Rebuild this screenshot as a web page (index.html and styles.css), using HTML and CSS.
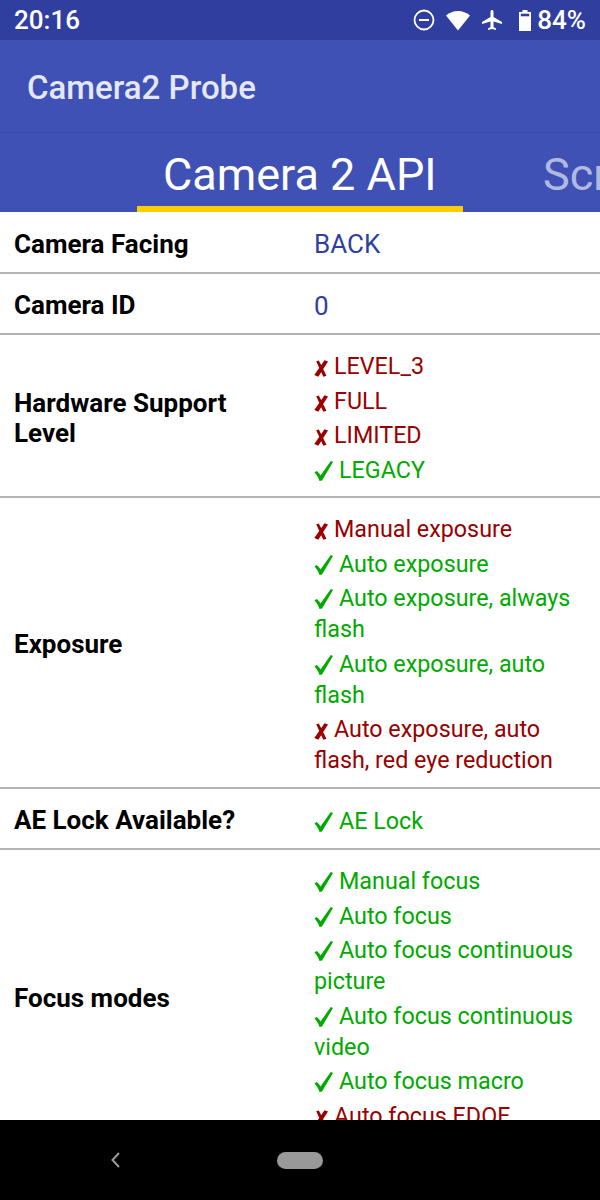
FILE: index.html
```html
<!DOCTYPE html>
<html lang="en">
<head>
  <meta charset="UTF-8">
  <meta name="viewport" content="width=device-width, initial-scale=1.0">
  <title>Camera2 Probe</title>
  <link rel="stylesheet" href="styles.css">
</head>
<body>
  <svg class="defs" width="0" height="0">
    <symbol id="cross" viewBox="0 0 14 17"><path d="M10.500 0.300L14 1.500 4.300 16.700 0.300 15z M2.200 1.200L4.800 0.500 12.500 15.800 9.300 16.700z"/></symbol>
    <symbol id="check" viewBox="0 0 19 20"><path d="M16.800 0L19 1 8 19.500 5.500 20C4.500 16.500 2.500 13.500 0.500 11.500L2.500 10C4 11 5.500 12.500 6.500 14.500z"/></symbol>
  </svg>
  <div class="phone">
    <div class="status-bar">
      <span class="clock">20:16</span>
      <div class="status-icons">
        <svg class="icon" width="24" height="24" viewBox="0 0 24 24"><circle cx="12" cy="12" r="9.500" fill="none" stroke="#fff" stroke-width="1.800"/><rect x="7" y="11" width="10" height="2" fill="#fff"/></svg>
        <svg class="icon" width="26" height="24" viewBox="0 0 26 24"><path d="M1 7.500C4.500 4.600 8.600 3 13 3s8.500 1.600 12 4.500L13 22.500z" fill="#fff"/></svg>
        <svg class="icon" width="24" height="24" viewBox="0 0 24 24"><path d="M22 16v-2l-8.500-5V3.500C13.500 2.700 12.800 2 12 2s-1.500.7-1.500 1.500V9L2 14v2l8.500-2.500V19L8 20.500V22l4-1 4 1v-1.500L13.500 19v-5.500z" fill="#fff"/></svg>
        <svg class="icon battery-icon" width="14" height="24" viewBox="0 0 14 24"><path d="M4.500 2h5v2H13v19H1V4h3.500z" fill="#fff"/><rect x="2.800" y="5.700" width="8.400" height="2.600" fill="#303f9f"/></svg>
        <span class="battery">84%</span>
      </div>
    </div>

    <header class="toolbar">
      <span class="app-title">Camera2 Probe</span>
    </header>

    <nav class="tabs">
      <div class="tab active">Camera 2 API</div>
      <div class="tab">Screen</div>
    </nav>

    <main class="content">
      <div class="row">
        <div class="label">Camera Facing</div>
        <div class="value plain">BACK</div>
      </div>
      <div class="row">
        <div class="label">Camera ID</div>
        <div class="value plain">0</div>
      </div>
      <div class="row">
        <div class="label">Hardware Support Level</div>
        <div class="value">
          <p class="no"><svg class="mark"><use href="#cross"/></svg>LEVEL_3</p>
          <p class="no"><svg class="mark"><use href="#cross"/></svg>FULL</p>
          <p class="no"><svg class="mark"><use href="#cross"/></svg>LIMITED</p>
          <p class="yes"><svg class="mark"><use href="#check"/></svg>LEGACY</p>
        </div>
      </div>
      <div class="row">
        <div class="label">Exposure</div>
        <div class="value">
          <p class="no"><svg class="mark"><use href="#cross"/></svg>Manual exposure</p>
          <p class="yes"><svg class="mark"><use href="#check"/></svg>Auto exposure</p>
          <p class="yes"><svg class="mark"><use href="#check"/></svg>Auto exposure, always flash</p>
          <p class="yes"><svg class="mark"><use href="#check"/></svg>Auto exposure, auto flash</p>
          <p class="no"><svg class="mark"><use href="#cross"/></svg>Auto exposure, auto flash, red eye reduction</p>
        </div>
      </div>
      <div class="row">
        <div class="label">AE Lock Available?</div>
        <div class="value">
          <p class="yes"><svg class="mark"><use href="#check"/></svg>AE Lock</p>
        </div>
      </div>
      <div class="row">
        <div class="label">Focus modes</div>
        <div class="value">
          <p class="yes"><svg class="mark"><use href="#check"/></svg>Manual focus</p>
          <p class="yes"><svg class="mark"><use href="#check"/></svg>Auto focus</p>
          <p class="yes"><svg class="mark"><use href="#check"/></svg>Auto focus continuous picture</p>
          <p class="yes"><svg class="mark"><use href="#check"/></svg>Auto focus continuous video</p>
          <p class="yes"><svg class="mark"><use href="#check"/></svg>Auto focus macro</p>
          <p class="no"><svg class="mark"><use href="#cross"/></svg>Auto focus EDOF</p>
        </div>
      </div>
    </main>

    <div class="nav-bar">
      <svg class="back" width="14" height="20" viewBox="0 0 14 20"><path d="M11 3L4.500 10 11 17" fill="none" stroke="#999" stroke-width="2"/></svg>
      <div class="home"></div>
    </div>
  </div>
</body>
</html>
```

FILE: styles.css
```css
html, body {
  margin: 0;
  height: 100%;
  overflow: hidden;
}
body {
  font-family: Roboto, "DejaVu Sans", sans-serif;
  background: #fff;
}
.defs {
  position: absolute;
}
.phone {
  width: 600px;
  height: 1200px;
  display: flex;
  flex-direction: column;
  overflow: hidden;
}
.status-bar {
  height: 40px;
  flex-shrink: 0;
  background: #303f9f;
  color: #fff;
  display: flex;
  justify-content: space-between;
  align-items: center;
  padding: 0 14px;
  font-size: 26px;
  font-weight: 500;
}
.status-icons {
  display: flex;
  align-items: center;
  gap: 9px;
}
.icon {
  display: block;
}
.battery-icon {
  margin-left: 5px;
}
.battery {
  margin-left: -4px;
}
.toolbar {
  height: 93px;
  flex-shrink: 0;
  background: #3f51b5;
  display: flex;
  align-items: center;
  padding: 3px 0 0 27px;
  box-sizing: border-box;
  border-bottom: 1px solid #3a4aa8;
}
.app-title {
  color: #e4e7f4;
  font-size: 33px;
  font-weight: 500;
}
.tabs {
  height: 79px;
  flex-shrink: 0;
  background: #3f51b5;
  display: flex;
  overflow: hidden;
  padding-left: 137px;
  box-sizing: border-box;
}
.tab {
  flex-shrink: 0;
  color: #b2b9e1;
  font-size: 45px;
  line-height: 84px;
  padding: 0 26px;
  box-sizing: border-box;
  height: 79px;
}
.tab.active {
  color: #fff;
  width: 326px;
  border-bottom: 6px solid #ffcc00;
  white-space: nowrap;
  margin-right: 54px;
}
.content {
  flex: 1;
  min-height: 0;
  overflow: hidden;
}
.row {
  display: flex;
  align-items: center;
  box-sizing: border-box;
  min-height: 61.500px;
  border-bottom: 2px solid #b4b4b4;
}
.label {
  width: 314px;
  flex-shrink: 0;
  box-sizing: border-box;
  padding: 4px 60px 0 14px;
  font-size: 26px;
  line-height: 30px;
  font-weight: 700;
  color: #000;
}
.value {
  flex: 1;
  display: flex;
  flex-direction: column;
  gap: 3.500px;
  padding: 16px 14px 10.500px 0;
  font-size: 23.300px;
  line-height: 31px;
}
.value p {
  margin: 0;
}
.value.plain {
  display: block;
  color: #303f9f;
  font-size: 26px;
  line-height: 31px;
  padding-top: 17px;
  padding-bottom: 11.500px;
}
.no {
  color: #990000;
}
.yes {
  color: #00aa00;
}
.mark {
  fill: currentColor;
  vertical-align: -3px;
}
.no .mark {
  width: 14px;
  height: 17px;
  margin: 0 6px 0 0;
}
.yes .mark {
  width: 19px;
  height: 20px;
  margin-right: 6px;
}
.nav-bar {
  height: 80px;
  flex-shrink: 0;
  background: #000;
  position: relative;
}
.back {
  position: absolute;
  left: 108px;
  top: 30px;
}
.home {
  position: absolute;
  left: 277px;
  top: 32px;
  width: 46px;
  height: 17px;
  border-radius: 9px;
  background: #999;
}
```
